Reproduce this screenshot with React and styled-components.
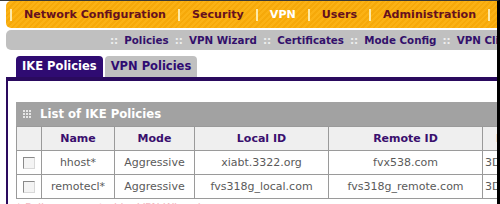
import React from "react";
import styled, { createGlobalStyle } from "styled-components";

const GlobalStyle = createGlobalStyle`
  html, body {
    margin: 0;
    padding: 0;
    background: #ffffff;
  }
  body {
    font-family: "DejaVu Sans", Verdana, sans-serif;
  }
`;

const Page = styled.div`
  width: 497px;
  height: 203px;
  overflow: hidden;
  border-top: 1px solid #3a3a3a;
  border-right: 3px solid #000000;
  display: flex;
  flex-direction: column;
  background: #ffffff;
`;

const TopNav = styled.div`
  margin-left: 6px;
  height: 27px;
  flex: none;
  border-radius: 5px 0 0 5px;
  background: repeating-linear-gradient(
    135deg,
    #fbb215 0px,
    #fbb215 2px,
    #f6a90a 2px,
    #f6a90a 4px
  );
  display: flex;
  align-items: center;
  padding-left: 4px;
  white-space: nowrap;
  overflow: hidden;
`;

const Sep = styled.span`
  display: inline-block;
  width: 2px;
  height: 12px;
  background: #fde9a8;
  flex: none;
`;

const NavItem = styled.span`
  padding: 0 12px;
  font-size: 11.1px;
  font-weight: bold;
  color: ${(p) => (p.$active ? "#ffffff" : "#66101f")};
  flex: none;
`;

const SubNav = styled.div`
  margin: 2px 0 0 6px;
  height: 20px;
  flex: none;
  border-radius: 5px 0 0 5px;
  background: #c0c0c0;
  display: flex;
  align-items: center;
  padding-left: 98px;
  white-space: nowrap;
  overflow: hidden;
`;

const SubDots = styled.span`
  color: #eeeeee;
  font-size: 10.3px;
  font-weight: bold;
  padding: 0 6px;
  flex: none;
`;

const SubItem = styled.span`
  color: #33106b;
  font-size: 10.3px;
  font-weight: bold;
  flex: none;
`;

const Tabs = styled.div`
  margin: 6px 0 0 16px;
  display: flex;
  gap: 2px;
  height: 21px;
  flex: none;
`;

const Tab = styled.div`
  padding: 0 6px;
  height: 21px;
  line-height: 21px;
  border-radius: 4px 4px 0 0;
  font-size: 11.5px;
  font-weight: bold;
  background: ${(p) => (p.$active ? "#2f0b72" : "#c0c0c0")};
  color: ${(p) => (p.$active ? "#ffffff" : "#2f0b72")};
`;

const Content = styled.div`
  margin-left: 6px;
  flex: 1;
  border-top: 4px solid #2a0a5e;
  border-left: 2px solid #2a0a5e;
  padding: 21px 0 0 8px;
  overflow: hidden;
`;

const SectionHeader = styled.div`
  height: 24px;
  background: #a2a2a2;
  display: flex;
  align-items: center;
  gap: 8px;
  padding-left: 7px;
  color: #ffffff;
  font-size: 11.7px;
  font-weight: bold;
  white-space: nowrap;
`;

const Table = styled.table`
  border-collapse: collapse;
  table-layout: fixed;
  width: 560px;
  font-size: 11px;
`;

const Th = styled.th`
  height: 23px;
  background: #efefef;
  border: 1px solid #9a9a9a;
  color: #3a0f6e;
  font-weight: bold;
  text-align: center;
  white-space: nowrap;
  overflow: hidden;
  padding: 0;
`;

const Td = styled.td`
  height: 23px;
  border: 1px solid #9a9a9a;
  color: #5a5a5a;
  text-align: ${(p) => (p.$left ? "left" : "center")};
  padding: ${(p) => (p.$left ? "0 0 0 2px" : "0")};
  white-space: nowrap;
  overflow: hidden;
`;

const Box = styled.span`
  display: inline-block;
  width: 10px;
  height: 10px;
  border: 1px solid #8a8a8a;
  border-right-color: #d8d8d8;
  border-bottom-color: #d8d8d8;
  background: #f4f4f4;
  vertical-align: middle;
`;

const Note = styled.div`
  margin-top: 2px;
  color: #f2b8c0;
  font-size: 11px;
  white-space: nowrap;
`;

const GridIcon = () => (
  <svg width="9" height="9" viewBox="0 0 9 9">
    {[0, 3, 6].map((y) =>
      [0, 3, 6].map((x) => (
        <rect key={`${x}-${y}`} x={x} y={y} width="2" height="2" fill="#e6e6e6" />
      ))
    )}
  </svg>
);

const navItems = ["Network Configuration", "Security", "VPN", "Users", "Administration"];
const subItems = ["Policies", "VPN Wizard", "Certificates", "Mode Config", "VPN Client"];
const rows = [
  { name: "hhost*", mode: "Aggressive", local: "xiabt.3322.org", remote: "fvx538.com", enc: "3DES" },
  { name: "remotecl*", mode: "Aggressive", local: "fvs318g_local.com", remote: "fvs318g_remote.com", enc: "3DES" },
];

export default function App() {
  return (
    <>
      <GlobalStyle />
      <Page>
        <TopNav>
          <Sep />
          {navItems.map((item) => (
            <React.Fragment key={item}>
              <NavItem $active={item === "VPN"}>{item}</NavItem>
              <Sep />
            </React.Fragment>
          ))}
        </TopNav>
        <SubNav>
          {subItems.map((item) => (
            <React.Fragment key={item}>
              <SubDots>::</SubDots>
              <SubItem>{item}</SubItem>
            </React.Fragment>
          ))}
        </SubNav>
        <Tabs>
          <Tab $active>IKE Policies</Tab>
          <Tab>VPN Policies</Tab>
        </Tabs>
        <Content>
          <SectionHeader>
            <GridIcon />
            List of IKE Policies
          </SectionHeader>
          <Table>
            <colgroup>
              <col style={{ width: 25 }} />
              <col style={{ width: 73 }} />
              <col style={{ width: 80 }} />
              <col style={{ width: 134 }} />
              <col style={{ width: 154 }} />
              <col style={{ width: 94 }} />
            </colgroup>
            <thead>
              <tr>
                <Th />
                <Th>Name</Th>
                <Th>Mode</Th>
                <Th>Local ID</Th>
                <Th>Remote ID</Th>
                <Th>Encryption</Th>
              </tr>
            </thead>
            <tbody>
              {rows.map((r) => (
                <tr key={r.name}>
                  <Td>
                    <Box />
                  </Td>
                  <Td>{r.name}</Td>
                  <Td>{r.mode}</Td>
                  <Td>{r.local}</Td>
                  <Td>{r.remote}</Td>
                  <Td $left>{r.enc}</Td>
                </tr>
              ))}
            </tbody>
          </Table>
          <Note>* Policy generated by VPN Wizard</Note>
        </Content>
      </Page>
    </>
  );
}
